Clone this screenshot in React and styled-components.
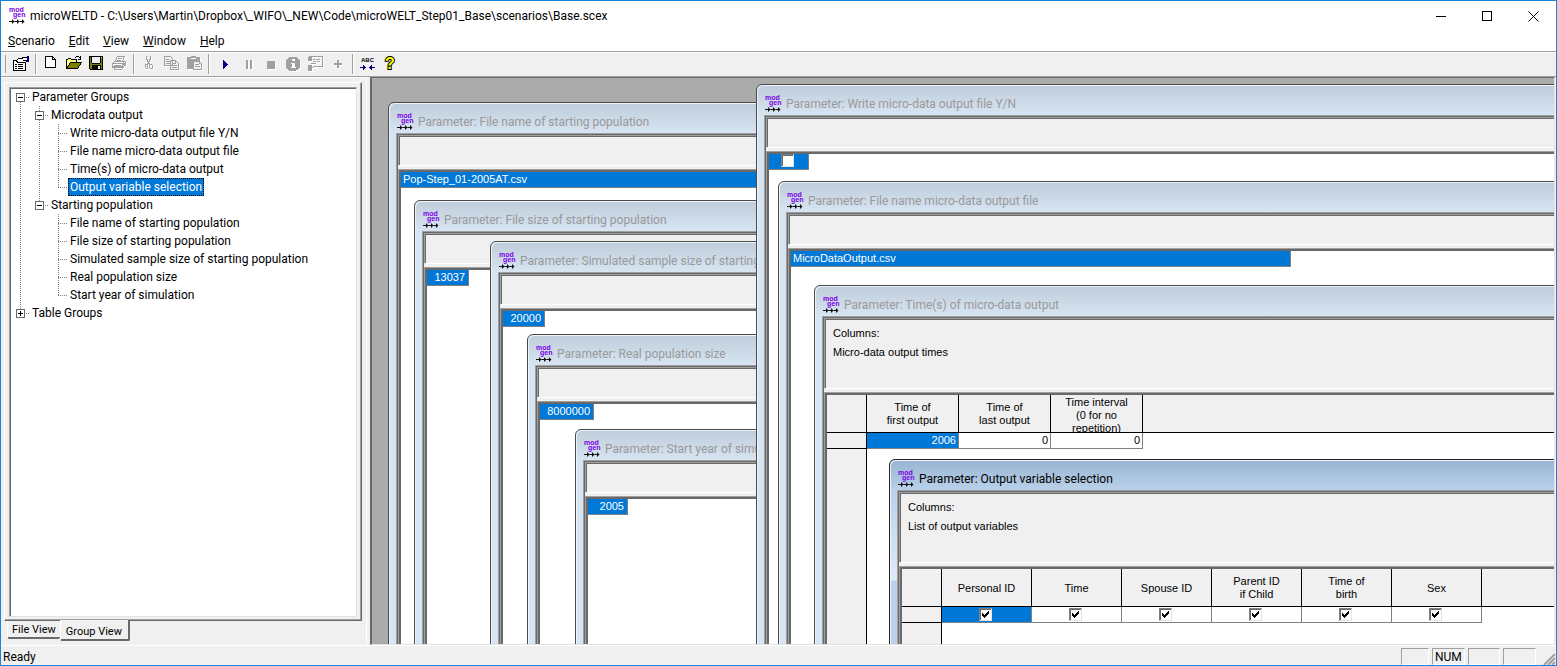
import React, { useState } from "react";
import styled, { createGlobalStyle, css } from "styled-components";

const GlobalStyle = createGlobalStyle`
  *, *::before, *::after {
    box-sizing: border-box;
  }

  body {
    margin: 0;
    font-family: Roboto, "Open Sans", sans-serif;
    font-size: 12px;
    line-height: 18px;
    color: #000;
  }

  button {
    margin: 0;
    padding: 0;
    border: 0;
    background: none;
    font: inherit;
    color: inherit;
  }
`;

const AppFrame = styled.div`
  display: flex;
  flex-direction: column;
  height: 100vh;
  background-color: #f0f0f0;
  border: 1px solid #1883d7;
  overflow: hidden;
`;

/* Title bar */
const TitleBar = styled.header`
  display: flex;
  align-items: center;
  flex: none;
  height: 30px;
  padding-left: 8px;
  background-color: #fff;

  h1 {
    flex: 1;
    min-width: 0;
    margin: 0 0 0 4px;
    font-size: 12px;
    font-weight: 400;
    white-space: nowrap;
    overflow: hidden;
  }
`;

const CaptionButton = styled.button`
  display: flex;
  align-items: center;
  justify-content: center;
  width: 46px;
  height: 30px;

  &:hover {
    background-color: #e5e5e5;
  }
`;

const MenuBar = styled.nav`
  display: flex;
  flex: none;
  height: 20px;
  background-color: #fff;
`;

const MenuItem = styled.button`
  padding: 0 7px;

  &::first-letter {
    text-decoration: underline;
  }
`;

/* Toolbar */
const Toolbar = styled.div`
  display: flex;
  align-items: center;
  flex: none;
  height: 26px;
  padding-left: 3px;
  border-top: 1px solid #a0a0a0;
  border-bottom: 1px solid #a0a0a0;
  box-shadow: inset 0 1px #fff;
`;

const Grip = styled.span`
  width: 2px;
  height: 18px;
  margin-right: 4px;
  border-right: 1px solid #a0a0a0;
`;

const Separator = styled.span`
  width: 2px;
  height: 20px;
  margin: 0 2px;
  border-left: 1px solid #a0a0a0;
  border-right: 1px solid #fff;
`;

const ToolButton = styled.button`
  display: flex;
  align-items: center;
  width: 23px;
  height: 22px;
  padding-left: 3px;

  svg {
    flex: none;
    overflow: visible;
  }

  &:disabled svg {
    filter: drop-shadow(1px 1px 0 #fff);
  }
`;

const Main = styled.main`
  display: flex;
  flex: 1;
  min-height: 0;
`;

/* Left pane */
const SidePane = styled.aside`
  display: flex;
  flex-direction: column;
  flex: none;
  width: 366px;
  margin-right: 3px;
  padding: 4px 4px 4px 3px;
  border-top: 1px solid #fff;
  border-right: 1px solid #fff;
`;

const TabPanel = styled.div`
  display: flex;
  flex: 1;
  min-height: 0;
  padding: 4px 4px 3px 4px;
  border: 1px solid #fff;
  border-right-color: #696969;
  border-bottom-color: #696969;
  box-shadow: inset -1px -1px #a0a0a0;
`;

const TreeBox = styled.div`
  flex: 1;
  border: 1px solid;
  border-color: #a0a0a0 #e3e3e3 #e3e3e3 #a0a0a0;
  box-shadow: inset 1px 1px #696969;
  background-color: #fff;
  padding: 0 0 0 1px;
  overflow: hidden;
`;

const TreeList = styled.ul`
  margin: 0;
  padding: 0;
  list-style: none;
`;

const TreeRow = styled.div`
  display: flex;
  height: 18px;
`;

const dots = (direction) =>
  `repeating-linear-gradient(${direction}, #808080 0 1px, transparent 1px 2px)`;

const Guide = styled.span`
  display: flex;
  flex: none;
  align-items: center;
  justify-content: center;
  width: 19px;
  height: 18px;
  background-repeat: no-repeat;
  background-image: ${({ $line }) => ($line ? dots("to bottom") : "none")};
  background-position: 9px 0;
  background-size: 1px 18px;

  ${({ $branch, $first, $last }) =>
    $branch &&
    css`
      background-image: ${dots("to bottom")}, ${dots("to right")};
      background-position: 9px ${$first ? "10px" : "0"}, 9px 9px;
      background-size: 1px ${$first ? "8px" : $last ? "10px" : "18px"}, 10px 1px;
    `}
`;

const Expander = styled.button`
  display: block;
  width: 9px;
  height: 9px;
  background-color: #fff;

  svg {
    display: block;
  }
`;

const TreeLabel = styled.button`
  height: 18px;
  padding: 0 1px;
  line-height: 16px;
  border: 1px solid transparent;
  white-space: nowrap;

  ${({ $selected }) =>
    $selected &&
    css`
      background-color: #0078d7;
      color: #fff;
      border: 1px dotted #ff8728;
      outline: 1px dotted #000;
      outline-offset: -1px;
    `}
`;

const Tabs = styled.div`
  display: flex;
  align-items: flex-start;
  flex: none;
  height: 20px;
  padding-left: 3px;
`;

const Tab = styled.button`
  height: ${({ $active }) => ($active ? "21px" : "18px")};
  margin-top: ${({ $active }) => ($active ? "-1px" : "0")};
  padding: ${({ $active }) => ($active ? "4px 6px 0 5px" : "1px 4px 0")};
  font-size: 11px;
  line-height: 15px;
  background-color: #f0f0f0;
  border-left: 1px solid #fff;
  border-right: ${({ $active }) => ($active ? "2px solid #696969" : "0")};
  border-bottom: 2px solid #696969;
  border-radius: 0 0 2px 2px;
`;

/* MDI area */
const Workspace = styled.section`
  position: relative;
  flex: 1;
  min-width: 0;
  margin-right: 1px;
  background-color: #ababab;
  border: 1px solid #e3e3e3;
  border-top-color: #696969;
  border-left: 2px solid #696969;
  overflow: hidden;
`;

const ChildWindow = styled.article`
  position: absolute;
  top: ${({ $top }) => $top}px;
  left: ${({ $left }) => $left}px;
  right: -20px;
  bottom: -20px;
  display: flex;
  flex-direction: column;
  padding: 0 7px 7px;
  border: 1px solid ${({ $active }) => ($active ? "#222" : "#4a4a4a")};
  border-radius: 6px 6px 0 0;
  box-shadow: inset 1px 1px #eef4fa;
  background: ${({ $active }) =>
    $active
      ? "linear-gradient(#99b4d1, #b9d1ea 30px, #e0ebf7 120px, #b9d1ea 121px)"
      : "linear-gradient(#bfcddb, #d7e4f2 30px)"};
`;

const ChildTitle = styled.h2`
  display: flex;
  align-items: center;
  flex: none;
  gap: 4px;
  height: 30px;
  margin: 0;
  padding: 8px 0 0 1px;
  font-size: 12px;
  font-weight: 400;
  white-space: nowrap;
  color: ${({ $active }) => ($active ? "#000" : "#999")};
`;

const Client = styled.div`
  display: flex;
  flex-direction: column;
  flex: 1;
  min-height: 0;
  border: 1px solid #a0a0a0;
  box-shadow: inset 1px 1px #696969;
  padding: 1px 0 0 1px;
  background-color: #f0f0f0;
  font-family: "Liberation Sans", Arial, sans-serif;
  font-size: 11px;
  line-height: 13px;
`;

const Caption = styled.div`
  flex: none;
  height: ${({ $tall }) => ($tall ? "71px" : "31px")};
  padding: 5px 0 0 8px;
  border: 1px solid #a0a0a0;
  border-bottom-color: #fff;
  box-shadow: inset 1px 1px #696969;
  line-height: 19px;

  p {
    margin: 0;
  }
`;

const GridPane = styled.div`
  display: flex;
  flex-direction: column;
  flex: 1;
  min-height: 0;
  margin-top: 3px;
  border-top: 1px solid #a0a0a0;
  border-left: 1px solid #a0a0a0;
  box-shadow: inset 2px 2px #696969;
  padding: 2px 0 0 2px;
  background-color: #fff;
`;

const ValueBox = styled.div`
  flex: none;
  width: ${({ $width }) => $width}px;
  height: 16px;
  padding: 0 3px 0 2px;
  line-height: 15px;
  text-align: ${({ $align }) => $align || "right"};
  background-color: #0078d7;
  color: #fff;
  border-right: 1px solid #808080;
  border-bottom: 1px solid #808080;
`;

const CheckHolder = styled.label`
  display: grid;
  justify-content: center;
  padding-right: 2px;

  > * {
    grid-area: 1 / 1;
  }

  svg {
    position: relative;
    width: 13px;
    height: 13px;
    pointer-events: none;
  }
`;

const Check = styled.input`
  appearance: none;
  display: block;
  width: 13px;
  height: 13px;
  margin: 0;
  border: 1px solid;
  border-color: #808080 #e3e3e3 #e3e3e3 #808080;
  box-shadow: inset 1px 1px #696969;
  background-color: #fff;
`;

const DataTable = styled.table`
  width: 100%;
  flex: none;
  table-layout: fixed;
  border-collapse: separate;
  border-spacing: 0;

  col:first-child {
    width: 40px;
  }

  th,
  td {
    padding: 0;
    font-weight: 400;
  }

  thead th {
    background-color: #f0f0f0;
    border-bottom: 1px solid #000;
    border-right: 1px solid #000;
  }

  thead th:last-child {
    border-right: 0;
  }

  tbody th {
    background-color: #f0f0f0;
    border-right: 1px solid #000;
    border-bottom: 1px solid #000;
  }
`;

const DataCol = styled.col`
  width: ${({ $width }) => $width}px;
`;

const HeadText = styled.div`
  display: flex;
  align-items: safe center;
  justify-content: center;
  height: 37px;
  padding-top: 1px;
  text-align: center;
  white-space: pre-line;
  overflow: hidden;
`;

const DataCell = styled.td`
  height: 16px;
  line-height: 15px;
  text-align: right;
  border-right: 1px solid #808080;
  border-bottom: 1px solid #808080;
  background-color: ${({ $selected }) => ($selected ? "#0078d7" : "#fff")};
  color: ${({ $selected }) => ($selected ? "#fff" : "#000")};

  span {
    padding-right: 2px;
  }
`;

const RowHeaderFill = styled.div`
  flex: 1;
  width: 40px;
  background-color: #f0f0f0;
  border-right: 1px solid #000;
`;

/* Status bar */
const StatusBar = styled.footer`
  display: flex;
  flex: none;
  gap: 3px;
  height: 20px;
  padding: 2px 0 0 2px;
  border-top: 1px solid #fff;
`;

const StatusMessage = styled.span`
  flex: 1;
`;

const StatusPane = styled.span`
  width: ${({ $width }) => $width}px;
  height: 17px;
  padding-left: 2px;
  line-height: 17px;
  border: 1px solid;
  border-color: #a0a0a0 #fff #fff #a0a0a0;
`;

/* Drawings */
const LogoMark = styled.svg`
  flex: none;
  width: 17px;
  height: 17px;
  overflow: visible;

  text {
    font-family: "Liberation Sans", sans-serif;
    font-size: 7px;
    font-weight: 700;
    fill: #7a00e6;
  }
`;

const Logo = () => (
  <LogoMark viewBox="0 1 17 17" aria-hidden="true">
    <text x="0" y="5">mod</text>
    <text x="4" y="10">gen</text>
    <path
      d="M0 14h3v-2l2.500 2.500L3 17v-2H0zM5.500 14H8v-2l2.500 2.500L8 17v-2H5.500zM10.500 14H13v-2l2.500 2.500L13 17v-2h-2.500z"
      fill="#111"
    />
  </LogoMark>
);

const Icon = ({ children, size = 16, dx = 0, dy = 0 }) => (
  <svg
    width={size}
    height={size}
    viewBox={`${-dx} ${-dy} ${size} ${size}`}
    fill="none"
    shapeRendering="crispEdges"
    aria-hidden="true"
  >
    {children}
  </svg>
);

const GRAY = "#a0a0a0";

const icons = {
  properties: (
    <Icon>
      <path d="M0.500 4.500h12v10h-12z" fill="#fff" stroke="#000" />
      <path d="M2 8h2v1H2zM5 8h5v1H5zM2 10h2v1H2zM5 10h5v1H5zM2 12h2v1H2zM5 12h5v1H5z" fill="#000" />
      <path d="M3 5l3-3h3l4 2v2l-3 1-2-1-2 1z" fill="#fff" stroke="#000" />
      <path d="M10 1h4v4h-4z" fill="#fff" />
      <path d="M9 1h5v1H9zM10 4h4v1h-4z" fill="#000" />
      <path d="M14 0h2v6h-2z" fill="#000080" />
    </Icon>
  ),
  newFile: (
    <Icon dx={1} dy={-1}>
      <path d="M2.500 1.500h7l3 3v8h-10z" fill="#fff" stroke="#000" />
      <path d="M9.500 1.500v3h3" stroke="#000" />
    </Icon>
  ),
  open: (
    <Icon dx={1} dy={-1}>
      <path d="M0.500 13.500v-9h1l1-1h2l1 1h5v3" fill="#ffff80" stroke="#000" />
      <path d="M0.500 13.500l4-6h11l-4 6z" fill="#808000" stroke="#000" />
      <path d="M9 2h1V1h3v1h1v1h-1V2h-3v1H9zM14 1h1v4h-3V4h2z" fill="#000" />
    </Icon>
  ),
  save: (
    <Icon dy={-1}>
      <path d="M1.500 1.500h13v13h-12l-1-1z" fill="#808000" stroke="#000" />
      <path d="M4 2h8v6H4z" fill="#f0f0f0" />
      <path d="M3 2h1v6H3zM12 2h1v6h-1zM4 8h8v1H4zM4 10h9v4H4z" fill="#000" />
      <path d="M10 11h2v3h-2zM13 2h1v1h-1z" fill="#f0f0f0" />
    </Icon>
  ),
  print: (
    <Icon dy={-1}>
      <path d="M4.500 6l2-5h7l-2 5M1.500 8.500l3-2.500h10l-3 2.500zM1.500 8.500v4h10v-4M11.500 12.500l3-2.500V6M3.500 12.500v2h7l2-2" stroke={GRAY} />
      <path d="M7 3h4v1H7zM6 5h4v1H6zM3 10h7v1H3zM2 11h9v1H2zM12 8h2v2h-2z" fill={GRAY} />
    </Icon>
  ),
  cut: (
    <Icon dx={1} dy={-1}>
      <path d="M5 1h1v4H5zM9 1h1v4H9zM6 4h1v3H6zM8 4h1v3H8zM7 6h1v3H7zM6 8h1v2H6zM8 8h1v2H8z" fill={GRAY} />
      <path d="M4.500 9.500h2v4h-1l-1-1zM8.500 9.500h2l1 1v3h-2l-1-1z" stroke={GRAY} />
    </Icon>
  ),
  copy: (
    <Icon dx={1} dy={-1}>
      <path d="M0.500 1.500h6l2 2v7h-8zM6.500 5.500h5l3 3v6h-8z" fill="#f0f0f0" stroke={GRAY} />
      <path d="M2 4h3v1H2zM2 6h4v1H2zM2 8h4v1H2zM8 8h3v1H8zM8 10h5v1H8zM8 12h5v1H8zM11 6h1v3h-1z" fill={GRAY} />
    </Icon>
  ),
  paste: (
    <Icon dx={1} dy={-1}>
      <path d="M0 2h4V1h5v1h4v12H0z" fill={GRAY} />
      <path d="M4 3h5v1H4z" fill="#fff" />
      <path d="M6.500 6.500h6l2 2v6h-8z" fill="#f0f0f0" stroke={GRAY} />
      <path d="M8 9h4v1H8zM8 11h5v1H8zM12 7h1v2h-1z" fill={GRAY} />
    </Icon>
  ),
  run: (
    <Icon dx={2}>
      <path d="M6 4h1v9H6zM7 5h1v7H7zM8 6h1v5H8zM9 7h1v3H9zM10 8h1v1h-1z" fill="#000080" />
    </Icon>
  ),
  pause: (
    <Icon dx={3}>
      <path d="M5 4h2v9H5zM9 4h2v9H9z" fill={GRAY} />
    </Icon>
  ),
  stop: (
    <Icon dx={2}>
      <path d="M4 5h8v8H4z" fill={GRAY} />
    </Icon>
  ),
  info: (
    <Icon dx={1}>
      <circle cx="8" cy="8" r="7.500" fill={GRAY} />
      <path d="M7 3h3v2H7zM6 7h4v4h1v1H6v-1h1V8H6z" fill="#fff" />
    </Icon>
  ),
  notes: (
    <Icon>
      <path d="M1.500 0.500h14v10h-9l-3 3" stroke={GRAY} />
      <path d="M1 1h4v4H1zM6 3h2v1H6zM9 3h4v1H9zM6 5h3v1H6zM10 5h3v1h-3zM4 7h5v1H4zM1 9h4v6H1z" fill={GRAY} />
    </Icon>
  ),
  add: (
    <Icon>
      <path d="M7 4h2v3h3v2H9v3H7V9H4V7h3z" fill={GRAY} />
    </Icon>
  ),
};

const AbcText = styled.text`
  font-family: "Liberation Sans", sans-serif;
  font-size: 6px;
  font-weight: 700;
  fill: #000;
`;

const HelpText = styled.text`
  font-family: "Liberation Sans", sans-serif;
  font-size: 16px;
  font-weight: 700;
  fill: #ffff00;
  stroke: #000;
  stroke-width: 2px;
  paint-order: stroke;
`;

icons.abc = (
  <Icon>
    <AbcText x="2" y="6">ABC</AbcText>
    <path d="M1 11h6v1H1zM4 9h1v5H4zM5 10h1v3H5zM10 11h6v1h-6zM12 9h1v5h-1zM11 10h1v3h-1z" fill="#000080" />
  </Icon>
);

icons.help = (
  <Icon>
    <HelpText x="3" y="13">?</HelpText>
  </Icon>
);

const CheckMark = () => (
  <svg viewBox="0 0 13 13" shapeRendering="crispEdges" aria-hidden="true">
    <path
      d="M3 5h1v3H3zM4 6h1v3H4zM5 7h1v3H5zM6 6h1v3H6zM7 5h1v3H7zM8 4h1v3H8zM9 3h1v3H9z"
      fill="#000"
    />
  </svg>
);

const toolGroups = [
  [["properties", "Properties"]],
  [
    ["newFile", "New"],
    ["open", "Open"],
    ["save", "Save"],
    ["print", "Print", true],
  ],
  [
    ["cut", "Cut", true],
    ["copy", "Copy", true],
    ["paste", "Paste", true],
  ],
  [
    ["run", "Run"],
    ["pause", "Pause", true],
    ["stop", "Stop", true],
    ["info", "Information", true],
    ["notes", "Notes", true],
    ["add", "Add", true],
  ],
  [
    ["abc", "Switch labels"],
    ["help", "Help"],
  ],
];

const treeData = [
  {
    label: "Parameter Groups",
    children: [
      {
        label: "Microdata output",
        children: [
          { label: "Write micro-data output file Y/N" },
          { label: "File name micro-data output file" },
          { label: "Time(s) of micro-data output" },
          { label: "Output variable selection" },
        ],
      },
      {
        label: "Starting population",
        children: [
          { label: "File name of starting population" },
          { label: "File size of starting population" },
          { label: "Simulated sample size of starting population" },
          { label: "Real population size" },
          { label: "Start year of simulation" },
        ],
      },
    ],
  },
  { label: "Table Groups", children: [], closed: true },
];

const TreeNode = ({ node, guides, first, last, selected, onSelect }) => {
  const [open, setOpen] = useState(!node.closed);

  return (
    <li>
      <TreeRow>
        {guides.map((line, i) => (
          <Guide key={i} $line={line} />
        ))}
        <Guide $branch $first={first} $last={last}>
          {node.children && (
            <Expander
              aria-label={`${open ? "Collapse" : "Expand"} ${node.label}`}
              onClick={() => setOpen(!open)}
            >
              <Icon size={9}>
                <path d="M0.500 0.500h8v8h-8z" stroke="#696969" />
                <path d={open ? "M2 4h5v1H2z" : "M2 4h5v1H2zM4 2h1v5H4z"} fill="#000" />
              </Icon>
            </Expander>
          )}
        </Guide>
        <TreeLabel
          $selected={selected === node.label}
          onClick={() => onSelect(node.label)}
        >
          {node.label}
        </TreeLabel>
      </TreeRow>
      {open && node.children && (
        <TreeList>
          {node.children.map((child, i) => (
            <TreeNode
              key={child.label}
              node={child}
              guides={[...guides, !last]}
              last={i === node.children.length - 1}
              selected={selected}
              onSelect={onSelect}
            />
          ))}
        </TreeList>
      )}
    </li>
  );
};

const ParameterWindow = ({ title, left, top, active, caption, children }) => (
  <ChildWindow $left={left} $top={top} $active={active}>
    <ChildTitle $active={active}>
      <Logo />
      Parameter: {title}
    </ChildTitle>
    <Client>
      <Caption $tall={!!caption}>
        {caption && (
          <>
            <p>Columns:</p>
            <p>{caption}</p>
          </>
        )}
      </Caption>
      <GridPane>{children}</GridPane>
    </Client>
  </ChildWindow>
);

const CheckField = ({ label, initial }) => {
  const [checked, setChecked] = useState(initial);
  return (
    <CheckHolder>
      <Check
        type="checkbox"
        aria-label={label}
        checked={checked}
        onChange={() => setChecked(!checked)}
      />
      {checked && <CheckMark />}
    </CheckHolder>
  );
};

const ParameterTable = ({ columns, width, children }) => (
  <>
    <DataTable>
      <colgroup>
        <col />
        {columns.map((name) => (
          <DataCol key={name} $width={width} />
        ))}
        <col />
      </colgroup>
      <thead>
        <tr>
          <th />
          {columns.map((name) => (
            <th key={name} scope="col">
              <HeadText>{name}</HeadText>
            </th>
          ))}
          <th />
        </tr>
      </thead>
      <tbody>
        <tr>
          <th />
          {children}
        </tr>
      </tbody>
    </DataTable>
    <RowHeaderFill />
  </>
);

const timeColumns = [
  "Time of\nfirst output",
  "Time of\nlast output",
  "Time interval\n(0 for no\nrepetition)",
];

const outputColumns = [
  "Personal ID",
  "Time",
  "Spouse ID",
  "Parent ID\nif Child",
  "Time of\nbirth",
  "Sex",
];

const App = () => {
  const [selected, setSelected] = useState("Output variable selection");
  const [tab, setTab] = useState("Group View");

  return (
    <>
      <GlobalStyle />
      <AppFrame>
        <TitleBar>
          <Logo />
          <h1>
            microWELTD - C:\Users\Martin\Dropbox\_WIFO\_NEW\Code\microWELT_Step01_Base\scenarios\Base.scex
          </h1>
          <CaptionButton aria-label="Minimize">
            <Icon size={11}>
              <path d="M0 5h10v1H0z" fill="#000" />
            </Icon>
          </CaptionButton>
          <CaptionButton aria-label="Maximize">
            <Icon size={11}>
              <path d="M0.500 0.500h9v9h-9z" stroke="#000" />
            </Icon>
          </CaptionButton>
          <CaptionButton aria-label="Close">
            <svg width="11" height="11" viewBox="0 0 11 11" aria-hidden="true">
              <path d="M0.500 0.500l10 10M10.500 0.500l-10 10" stroke="#000" />
            </svg>
          </CaptionButton>
        </TitleBar>

        <MenuBar>
          {["Scenario", "Edit", "View", "Window", "Help"].map((item) => (
            <MenuItem key={item}>{item}</MenuItem>
          ))}
        </MenuBar>

        <Toolbar>
          <Grip />
          {toolGroups.map((group, i) => (
            <React.Fragment key={i}>
              {i > 0 && <Separator />}
              {group.map(([icon, label, disabled]) => (
                <ToolButton key={icon} aria-label={label} disabled={disabled}>
                  {icons[icon]}
                </ToolButton>
              ))}
            </React.Fragment>
          ))}
        </Toolbar>

        <Main>
          <SidePane>
            <TabPanel>
              <TreeBox>
                <TreeList>
                  {treeData.map((node, i) => (
                    <TreeNode
                      key={node.label}
                      node={node}
                      guides={[]}
                      first={i === 0}
                      last={i === treeData.length - 1}
                      selected={selected}
                      onSelect={setSelected}
                    />
                  ))}
                </TreeList>
              </TreeBox>
            </TabPanel>
            <Tabs>
              {["File View", "Group View"].map((name) => (
                <Tab key={name} $active={tab === name} onClick={() => setTab(name)}>
                  {name}
                </Tab>
              ))}
            </Tabs>
          </SidePane>

          <Workspace>
            <ParameterWindow title="File name of starting population" left={16} top={24}>
              <ValueBox $width={501} $align="left">Pop-Step_01-2005AT.csv</ValueBox>
            </ParameterWindow>
            <ParameterWindow title="File size of starting population" left={42} top={122}>
              <ValueBox $width={42}>13037</ValueBox>
            </ParameterWindow>
            <ParameterWindow
              title="Simulated sample size of starting population"
              left={118}
              top={163}
            >
              <ValueBox $width={42}>20000</ValueBox>
            </ParameterWindow>
            <ParameterWindow title="Real population size" left={155} top={256}>
              <ValueBox $width={54}>8000000</ValueBox>
            </ParameterWindow>
            <ParameterWindow title="Start year of simulation" left={203} top={351}>
              <ValueBox $width={40}>2005</ValueBox>
            </ParameterWindow>
            <ParameterWindow title="Write micro-data output file Y/N" left={384} top={6}>
              <ValueBox $width={40}>
                <CheckField label="Write micro-data output file" initial={false} />
              </ValueBox>
            </ParameterWindow>
            <ParameterWindow title="File name micro-data output file" left={406} top={103}>
              <ValueBox $width={500} $align="left">MicroDataOutput.csv</ValueBox>
            </ParameterWindow>
            <ParameterWindow
              title="Time(s) of micro-data output"
              left={442}
              top={207}
              caption="Micro-data output times"
            >
              <ParameterTable columns={timeColumns} width={92}>
                <DataCell $selected><span>2006</span></DataCell>
                <DataCell><span>0</span></DataCell>
                <DataCell><span>0</span></DataCell>
              </ParameterTable>
            </ParameterWindow>
            <ParameterWindow
              title="Output variable selection"
              left={517}
              top={381}
              active
              caption="List of output variables"
            >
              <ParameterTable columns={outputColumns} width={90}>
                {outputColumns.map((name, i) => (
                  <DataCell key={name} $selected={i === 0}>
                    <CheckField label={name} initial />
                  </DataCell>
                ))}
              </ParameterTable>
            </ParameterWindow>
          </Workspace>
        </Main>

        <StatusBar>
          <StatusMessage>Ready</StatusMessage>
          <StatusPane $width={28} />
          <StatusPane $width={33}>NUM</StatusPane>
          <StatusPane $width={32} />
          <StatusPane $width={33} />
          <Icon size={17}>
            <path
              d="M5 17L16 6M9 17l7-7M13 17l3-3"
              stroke={GRAY}
              strokeWidth="2"
              shapeRendering="auto"
            />
          </Icon>
        </StatusBar>
      </AppFrame>
    </>
  );
};

export default App;
